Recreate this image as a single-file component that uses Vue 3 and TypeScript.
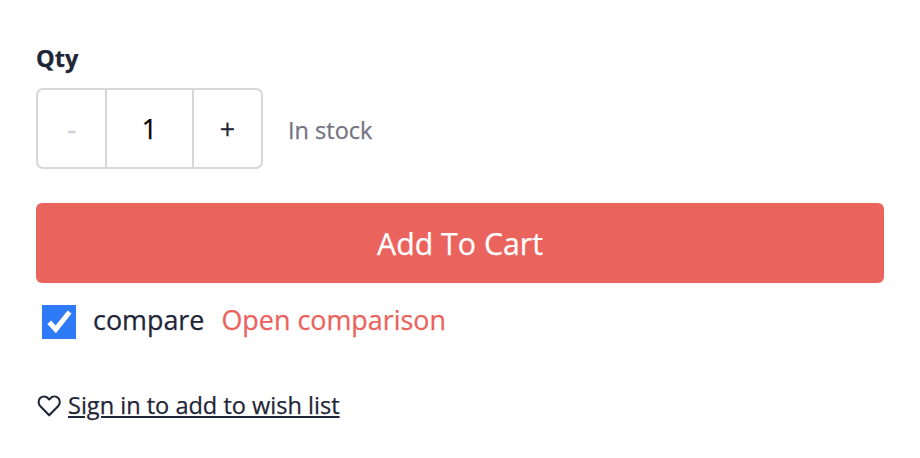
<script setup lang="ts">
import { ref } from 'vue'

const qty = ref<number>(1)
const compare = ref<boolean>(true)

function decrease(): void {
  if (qty.value > 1) qty.value--
}
</script>

<template>
  <main class="purchase">
    <div class="label">Qty</div>
    <div class="stock-row">
      <div class="stepper">
        <button class="step" :disabled="qty <= 1" @click="decrease">-</button>
        <span class="value">{{ qty }}</span>
        <button class="step" @click="qty++">+</button>
      </div>
      <span class="stock">In stock</span>
    </div>
    <button class="cart">Add To Cart</button>
    <div class="compare-row">
      <button class="check" :class="{ on: compare }" role="checkbox" :aria-checked="compare" @click="compare = !compare">
        <svg v-if="compare" viewBox="0 0 34 34" width="34" height="34">
          <path d="M7.2 17.2 L13.8 24.4 L27.6 7" fill="none" stroke="#fff" stroke-width="5" />
        </svg>
      </button>
      <span class="compare-text">compare</span>
      <a class="open">Open comparison</a>
    </div>
    <div class="wish-row">
      <svg class="heart" viewBox="0 0 24 22" width="24" height="22">
        <path d="M12.2 20.3 L3.6 11.6 C1.1 9 0.9 5.3 3.2 3.1 C5.5 0.9 9 1.1 11.2 3.4 L12.2 4.4 L13.2 3.4 C15.4 1.1 18.9 0.9 21.2 3.1 C23.5 5.3 23.3 9 20.8 11.6 Z" fill="none" stroke="#1f2638" stroke-width="2.1" stroke-linejoin="round" />
      </svg>
      <a class="signin">Sign in to add to wish list</a>
    </div>
  </main>
</template>

<style>
body {
  background: #fff;
}
</style>

<style scoped>
.purchase {
  box-sizing: border-box;
  height: 458px;
  padding: 41px 36px 0;
  font-family: "Open Sans", sans-serif;
  color: #1f2638;
  -webkit-text-stroke: 0.25px;
}
button {
  padding: 0;
  border: 0;
  font-family: inherit;
  color: inherit;
}
.label {
  height: 47px;
  line-height: 34px;
  font-size: 23.5px;
  font-weight: 700;
}
.stock-row {
  display: flex;
  align-items: center;
}
.stepper {
  box-sizing: border-box;
  display: flex;
  width: 227px;
  height: 81px;
  border: 2px solid #d6d6db;
  border-radius: 7px;
}
.step {
  width: 67px;
  background: none;
  font-size: 26.9px;
}
.step:disabled {
  color: #d1d2d8;
  -webkit-text-stroke-width: 0.7px;
}
.value {
  flex: 1;
  border: solid #d6d6db;
  border-width: 0 2px;
  font-size: 26.9px;
  line-height: 77px;
  text-align: center;
  color: #000;
}
.stock {
  margin-left: 25px;
  padding-top: 2px;
  font-size: 23.5px;
  color: #72747f;
}
.cart {
  display: block;
  width: 100%;
  height: 80px;
  margin-top: 34px;
  border-radius: 6px;
  background: #ea635c;
  color: #fff;
  font-size: 30.3px;
}
.compare-row {
  display: flex;
  align-items: center;
  height: 34px;
  margin-top: 22px;
  padding-left: 6px;
  font-size: 26.9px;
}
.check {
  width: 34px;
  height: 34px;
  background: #ddd;
}
.check.on {
  background: #2f7af7;
}
.check svg {
  display: block;
}
.compare-text {
  margin-left: 17px;
  padding-bottom: 6px;
}
.open {
  margin-left: 17px;
  padding-bottom: 6px;
  color: #ea635c;
}
.wish-row {
  display: flex;
  align-items: center;
  height: 34px;
  margin-top: 50px;
  padding-left: 1px;
  font-size: 23.55px;
}
.signin {
  margin-left: 7px;
  padding-bottom: 3px;
  text-decoration: underline;
}
</style>
